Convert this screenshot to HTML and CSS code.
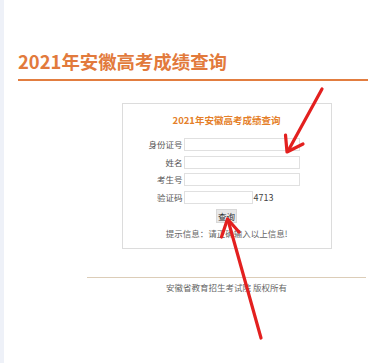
FILE: index.html
```html
<!DOCTYPE html>
<html lang="zh-CN">
<head>
<meta charset="utf-8">
<title>2021年安徽高考成绩查询</title>
<link rel="stylesheet" href="styles.css">
</head>
<body>
<header class="header">
  <h1 class="page-title">2021年安徽高考成绩查询</h1>
</header>
<main class="main">
  <section class="box">
    <h2 class="box-title">2021年安徽高考成绩查询</h2>
    <form class="form">
      <label class="label">身份证号</label>
      <span class="field"><input class="input" type="text"></span>
      <label class="label">姓名</label>
      <span class="field"><input class="input" type="text"></span>
      <label class="label">考生号</label>
      <span class="field"><input class="input" type="text"></span>
      <label class="label">验证码</label>
      <span class="field"><input class="input input-code" type="text"><span class="code">4713</span></span>
    </form>
    <div class="actions"><button class="btn" type="button">查询</button></div>
    <p class="hint">提示信息：请正确输入以上信息!</p>
  </section>
  <footer class="footer">安徽省教育招生考试院 版权所有</footer>
</main>
<svg class="arrows" width="377" height="363" viewBox="0 0 377 363" aria-hidden="true">
  <g fill="none" stroke="#e3201f" stroke-width="3.2" stroke-linecap="round" stroke-linejoin="round">
    <line x1="322" y1="89" x2="288" y2="151"/>
    <polyline points="285.5,135 287,152 303,144"/>
    <line x1="261" y1="338" x2="228" y2="220"/>
    <polyline points="221.5,237 227.5,219 239,232"/>
  </g>
</svg>
</body>
</html>
```

FILE: styles.css
```css
html, body {
  margin: 0;
  padding: 0;
}
body {
  background: #fff;
  border-left: 4px solid #eef1f8;
  min-height: 363px;
  box-sizing: border-box;
  font-family: "Noto Sans CJK SC", "Noto Sans", sans-serif;
  color: #444;
}
.header {
  margin: 0 9px 0 14px;
  padding-top: 51px;
  padding-bottom: 8px;
  border-bottom: 2px solid #e27d40;
}
.page-title {
  margin: 0;
  font-size: 18.4px;
  line-height: 20px;
  font-weight: 700;
  color: #e27a3c;
}
.main {
  margin-left: 83px;
  width: 279px;
}
.box {
  width: 210px;
  box-sizing: border-box;
  margin: 22px auto 0;
  border: 1px solid #dcdcdc;
  padding: 10px 0 9px;
}
.box-title {
  margin: 0;
  text-align: center;
  font-size: 9.5px;
  line-height: 12px;
  font-weight: 700;
  color: #e57f2a;
}
.form {
  margin: 12px 0 0;
  display: grid;
  grid-template-columns: 60px 1fr;
  row-gap: 4.7px;
  align-items: center;
}
.label {
  text-align: right;
  font-size: 8.5px;
  line-height: 13px;
  color: #555;
}
.field {
  display: flex;
  align-items: center;
  height: 13px;
}
.input {
  box-sizing: border-box;
  width: 116px;
  height: 13px;
  margin: 0 0 0 1px;
  padding: 0;
  border: 1px solid #e0e0e0;
  background: #fff;
}
.input-code {
  width: 69px;
}
.code {
  font-size: 9px;
  line-height: 13px;
  color: #444;
  margin-left: 1px;
}
.actions {
  display: flex;
  justify-content: center;
  margin-top: 5px;
}
.btn {
  box-sizing: border-box;
  width: 21px;
  height: 14px;
  padding: 0;
  margin: 0;
  border: 1px solid #d8d8d8;
  background: #e8e8e8;
  font-family: inherit;
  font-size: 8.5px;
  line-height: 12px;
  color: #333;
}
.hint {
  margin: 4px 0 0;
  text-align: center;
  font-size: 8.5px;
  line-height: 12px;
  color: #666;
}
.footer {
  margin-top: 28px;
  border-top: 1px solid #dccdb8;
  padding-top: 3px;
  text-align: center;
  font-size: 8.5px;
  line-height: 12px;
  color: #666;
}
.arrows {
  position: absolute;
  top: 0;
  left: 0;
  pointer-events: none;
}
```
